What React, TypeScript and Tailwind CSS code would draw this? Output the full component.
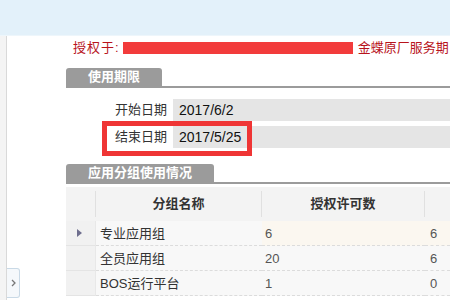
import React from 'react';

const font = { fontFamily: '"Liberation Sans", "Noto Sans CJK SC", sans-serif' };

const rows = [
  { name: '专业应用组', licensed: '6', used: '6', active: true },
  { name: '全员应用组', licensed: '20', used: '6', active: false },
  { name: 'BOS运行平台', licensed: '1', used: '0', active: false },
];

const SectionTab = ({ title }: { title: string }) => (
  <div className="flex border-b-2 border-[#9b9b9b]">
    <div className="h-[18px] px-[22px] rounded-t-[3px] bg-[#9b9b9b] text-white text-[13px] font-bold leading-[18px]">
      {title}
    </div>
  </div>
);

export default function App() {
  return (
    <div className="relative w-[450px] h-[300px] overflow-hidden bg-white flex flex-col" style={font}>
      <div className="h-[36px] shrink-0 bg-[#e3f1fa] border-b border-[#eef6fb]" />
      <div className="flex flex-1 min-h-0">
        <div className="w-[7px] shrink-0 bg-[#f4f4f4] border-r border-[#d9d9d9]" />
        <div className="flex-1 min-w-0 pl-[59px] flex flex-col">
          {/* licensee line */}
          <div className="mt-[5px] h-[13px] flex items-center whitespace-nowrap text-[13px] text-[#b8141c] leading-none">
            <span className="ml-[7px] tracking-[1px]">授权于:</span>
            <span className="ml-[3px] w-[230px] h-[12px] shrink-0 bg-[#f23b3b]" />
            <span className="ml-[5px]">金蝶原厂服务期</span>
          </div>

          <div className="mt-[14px]">
            <SectionTab title="使用期限" />
          </div>

          <div className="mt-[11px] flex flex-col gap-[5px] text-[13px]">
            <div className="flex h-[22px]">
              <div className="w-[101px] text-right text-[#333] leading-[22px]">开始日期</div>
              <div className="ml-[6px] flex-1 bg-[#e5e5e5] pl-[6px] text-[#111] text-[14px] leading-[22px]">2017/6/2</div>
            </div>
            <div className="relative flex h-[22px]">
              <div className="w-[101px] text-right text-[#333] leading-[22px]">结束日期</div>
              <div className="ml-[6px] flex-1 bg-[#e5e5e5] pl-[6px] text-[#111] text-[14px] leading-[22px]">2017/5/25</div>
              <div className="absolute left-[36px] top-[-5px] w-[150px] h-[35px] border-[5px] border-[#ef3535]" />
            </div>
          </div>

          <div className="mt-[16px]">
            <SectionTab title="应用分组使用情况" />
          </div>

          {/* table */}
          <div className="mt-[3px] text-[13px]">
            <div className="flex h-[34px] bg-[#f3f3f3] items-center font-bold text-[#333]">
              <div className="w-[30px] h-[26px] border-r border-[#e0e0e0]" />
              <div className="w-[166px] h-[26px] flex items-center justify-center border-r border-[#e0e0e0]">分组名称</div>
              <div className="w-[163px] h-[26px] flex items-center justify-center border-r border-[#e0e0e0]">授权许可数</div>
              <div className="flex-1" />
            </div>
            {rows.map((r) => (
              <div key={r.name} className="flex h-[25px]">
                <div className="w-[30px] flex items-center justify-center bg-[#f1f1f1] border-b border-[#e4e4e4] border-r border-r-[#e8e8e8]">
                  {r.active && (
                    <svg width="5" height="8" viewBox="0 0 5 8" className="ml-[-2px]">
                      <path d="M0 0 L5 4 L0 8 Z" fill="#6e6e8e" />
                    </svg>
                  )}
                </div>
                <div className="w-[166px] pl-[4px] pt-[2px] flex items-center bg-[#f8f8f8] border-b border-dashed border-[#dcdcdc] text-[#333]">
                  {r.name}
                </div>
                <div className={`w-[163px] pl-[3px] pt-[2px] flex items-center border-b border-dashed border-[#dcdcdc] text-[#555] ${r.active ? 'bg-[#fbf7f0]' : 'bg-[#f8f8f8]'}`}>
                  {r.licensed}
                </div>
                <div className={`flex-1 pl-[5px] pt-[2px] flex items-center border-b border-dashed border-[#dcdcdc] text-[#555] ${r.active ? 'bg-[#fbf7f0]' : 'bg-[#f8f8f8]'}`}>
                  {r.used}
                </div>
              </div>
            ))}
          </div>
        </div>
      </div>

      {/* side collapse handle */}
      <div className="absolute left-[7px] top-[268px] w-[13px] h-[30px] rounded-r-[3px] border border-l-0 border-[#c9d9e6] bg-[#f5f8fb] flex items-center justify-center">
        <svg width="5" height="8" viewBox="0 0 5 8">
          <path d="M1 1 L4 4 L1 7" fill="none" stroke="#777" strokeWidth="1.3" />
        </svg>
      </div>
    </div>
  );
}
